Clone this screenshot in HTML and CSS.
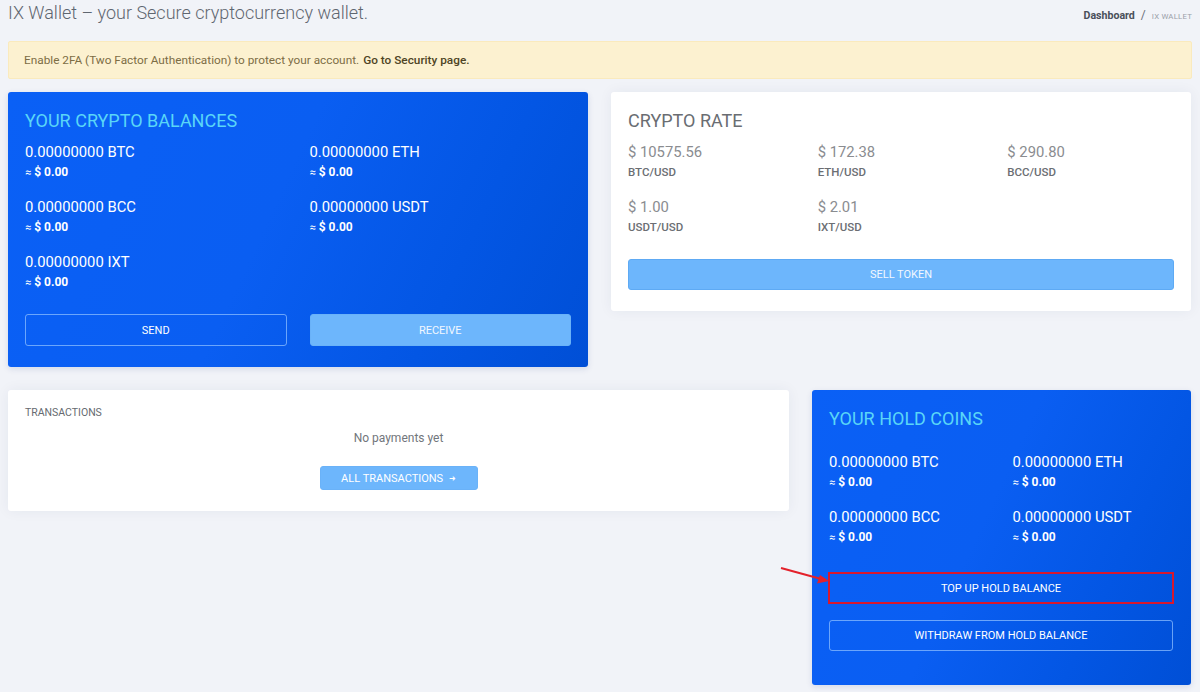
FILE: index.html
```html
<!DOCTYPE html>
<html lang="en">
<head>
<meta charset="utf-8">
<title>IX Wallet</title>
<link rel="stylesheet" href="styles.css">
</head>
<body>
<header class="page-head">
  <h1 class="page-title">IX Wallet – your Secure cryptocurrency wallet.</h1>
  <nav class="crumbs"><span class="crumb-main">Dashboard</span><span class="crumb-sep">/</span><span class="crumb-cur">IX WALLET</span></nav>
</header>

<div class="alert">Enable 2FA (Two Factor Authentication) to protect your account. <a class="alert-link">Go to Security page.</a></div>

<main class="grid">
  <section class="card card-blue balances">
    <h2 class="card-title">YOUR CRYPTO BALANCES</h2>
    <div class="coins coins-2">
      <div class="coin"><div class="amt">0.00000000 BTC</div><div class="usd"><span class="approx">≈</span> $ 0.00</div></div>
      <div class="coin"><div class="amt">0.00000000 ETH</div><div class="usd"><span class="approx">≈</span> $ 0.00</div></div>
      <div class="coin"><div class="amt">0.00000000 BCC</div><div class="usd"><span class="approx">≈</span> $ 0.00</div></div>
      <div class="coin"><div class="amt">0.00000000 USDT</div><div class="usd"><span class="approx">≈</span> $ 0.00</div></div>
      <div class="coin"><div class="amt">0.00000000 IXT</div><div class="usd"><span class="approx">≈</span> $ 0.00</div></div>
    </div>
    <div class="btn-row">
      <button class="btn btn-outline">SEND</button>
      <button class="btn btn-light">RECEIVE</button>
    </div>
  </section>

  <section class="card card-white rate">
    <h2 class="card-title grey">CRYPTO RATE</h2>
    <div class="coins coins-3">
      <div class="coin"><div class="amt rate-val">$ 10575.56</div><div class="pair">BTC/USD</div></div>
      <div class="coin"><div class="amt rate-val">$ 172.38</div><div class="pair">ETH/USD</div></div>
      <div class="coin"><div class="amt rate-val">$ 290.80</div><div class="pair">BCC/USD</div></div>
      <div class="coin"><div class="amt rate-val">$ 1.00</div><div class="pair">USDT/USD</div></div>
      <div class="coin"><div class="amt rate-val">$ 2.01</div><div class="pair">IXT/USD</div></div>
    </div>
    <button class="btn btn-light btn-wide sell">SELL TOKEN</button>
  </section>

  <section class="card card-white transactions">
    <h3 class="tx-title">TRANSACTIONS</h3>
    <p class="tx-empty">No payments yet</p>
    <button class="btn btn-light btn-small">ALL TRANSACTIONS <span class="arrow">➜</span></button>
  </section>

  <section class="card card-blue hold">
    <h2 class="card-title">YOUR HOLD COINS</h2>
    <div class="coins coins-2 hold-coins">
      <div class="coin"><div class="amt">0.00000000 BTC</div><div class="usd"><span class="approx">≈</span> $ 0.00</div></div>
      <div class="coin"><div class="amt">0.00000000 ETH</div><div class="usd"><span class="approx">≈</span> $ 0.00</div></div>
      <div class="coin"><div class="amt">0.00000000 BCC</div><div class="usd"><span class="approx">≈</span> $ 0.00</div></div>
      <div class="coin"><div class="amt">0.00000000 USDT</div><div class="usd"><span class="approx">≈</span> $ 0.00</div></div>
    </div>
    <div class="hold-btns">
      <button class="btn btn-outline btn-wide topup">TOP UP HOLD BALANCE<span class="highlight"></span></button>
      <button class="btn btn-outline btn-wide">WITHDRAW FROM HOLD BALANCE</button>
    </div>
    <svg class="pointer" width="52" height="20" viewBox="0 0 52 20" aria-hidden="true">
      <line x1="2" y1="2" x2="44" y2="13.5" stroke="#e3212b" stroke-width="2"/>
      <polygon points="50,15 38,17.5 41,9" fill="#e3212b"/>
    </svg>
  </section>
</main>
</body>
</html>
```

FILE: styles.css
```css
* { box-sizing: border-box; }

html, body { margin: 0; padding: 0; }

body {
  width: 1200px;
  height: 692px;
  overflow: hidden;
  background: #f1f3f8;
  font-family: Roboto, "Liberation Sans", Arial, sans-serif;
  color: #555;
  padding: 0 8px 0 8px;
}

.page-head {
  display: flex;
  justify-content: space-between;
  align-items: flex-start;
  height: 26px;
}

.page-title {
  margin: 0;
  font-size: 18px;
  font-weight: 300;
  line-height: 26px;
  color: #5f6670;
}

.crumbs {
  display: flex;
  align-items: baseline;
  padding-top: 8px;
  padding-right: 0;
}

.crumb-main {
  font-size: 10.6px;
  font-weight: 700;
  color: #4a4f5a;
}

.crumb-sep {
  font-size: 12px;
  color: #6a6f78;
  margin: 0 6px 0 6px;
}

.crumb-cur {
  font-size: 7.8px;
  color: #9aa0a8;
  letter-spacing: 0.2px;
}

.alert {
  margin-top: 15px;
  height: 38px;
  display: flex;
  align-items: center;
  padding: 0 15px;
  background: #fcf1d0;
  border: 1px solid #faeabd;
  border-radius: 2px;
  font-size: 11.8px;
  color: #7d6d45;
}

.alert-link {
  color: #4e4425;
  font-weight: 500;
  margin-left: 4px;
}

.grid {
  margin-top: 13px;
  display: grid;
  grid-template-columns: repeat(12, 1fr);
  column-gap: 23px;
  row-gap: 23px;
  align-items: start;
  width: 1183px;
}

.card {
  border-radius: 3px;
  padding: 18px 17px 21px 17px;
}

.card-blue {
  background: linear-gradient(115deg, #0a60f6 0%, #0a5ef2 45%, #0356e4 75%, #004fd6 100%);
  color: #fff;
  box-shadow: 0 2px 6px rgba(0, 40, 120, 0.12);
}

.card-white {
  background: #fff;
  box-shadow: 0 0 14px rgba(40, 50, 80, 0.06);
}

.balances { grid-column: span 6; }
.rate { grid-column: span 6; }
.transactions { grid-column: span 8; text-align: center; }
.hold { grid-column: span 4; position: relative; padding-bottom: 34px; padding-right: 18px; }

.card-title {
  margin: 0 0 10px 0;
  font-size: 18px;
  line-height: 22px;
  font-weight: 400;
  color: #5ad6f7;
}

.card-title.grey {
  color: #6a6d72;
}

.coins {
  display: grid;
  column-gap: 23px;
  row-gap: 15px;
}

.coins-2 { grid-template-columns: 1fr 1fr; }
.coins-3 { grid-template-columns: 1fr 1fr 1fr; }

.coin { height: 40px; }

.amt {
  font-size: 14.8px;
  line-height: 20px;
  color: #fff;
}

.usd {
  font-size: 12px;
  line-height: 20px;
  font-weight: 700;
  color: #fff;
}

.approx {
  font-weight: 400;
  font-size: 11px;
}

.rate-val { color: #8a8c90; }

.pair {
  font-size: 11.5px;
  line-height: 20px;
  font-weight: 500;
  color: #6b6e73;
}

.btn {
  font-family: Roboto, "Liberation Sans", Arial, sans-serif;
  font-size: 11px;
  font-weight: 400;
  color: #fff;
  border-radius: 3px;
  cursor: pointer;
  text-align: center;
  padding: 0;
}

.btn-outline {
  background: transparent;
  border: 1px solid rgba(140, 190, 255, 0.75);
  height: 32px;
}

.btn-light {
  background: #6db6fc;
  border: 1px solid #6ab2f8;
  height: 32px;
  color: #f2f8ff;
}

.btn-row {
  margin-top: 22px;
  display: grid;
  grid-template-columns: 1fr 1fr;
  column-gap: 23px;
}

.btn-wide { width: 100%; display: block; }

.sell {
  margin-top: 22px;
  height: 31px;
  border-color: #5eaaf4;
}

.tx-title {
  margin: 0;
  font-size: 10.5px;
  line-height: 10px;
  font-weight: 400;
  color: #666a70;
  text-align: left;
}

.tx-empty {
  margin: 12px 0 0 0;
  font-size: 12px;
  line-height: 16px;
  color: #72767c;
}

.btn-small {
  margin-top: 20px;
  height: 24px;
  width: 158px;
  font-size: 11px;
  color: #fff;
}

.arrow {
  font-size: 8px;
  margin-left: 3px;
  vertical-align: 1px;
}

.hold .card-title { margin-bottom: 22px; }

.hold-btns {
  margin-top: 25px;
  display: flex;
  flex-direction: column;
  gap: 16px;
}

.hold-btns .btn { height: 32px; }
.hold-btns .btn:last-child { height: 31px; }

.topup {
  position: relative;
  border-color: transparent;
}

.highlight {
  position: absolute;
  left: -2px;
  top: -1px;
  right: -2px;
  bottom: -1px;
  border: 2px solid #d8182e;
  pointer-events: none;
}

.pointer {
  position: absolute;
  left: -33px;
  top: 176px;
  overflow: visible;
}
```
